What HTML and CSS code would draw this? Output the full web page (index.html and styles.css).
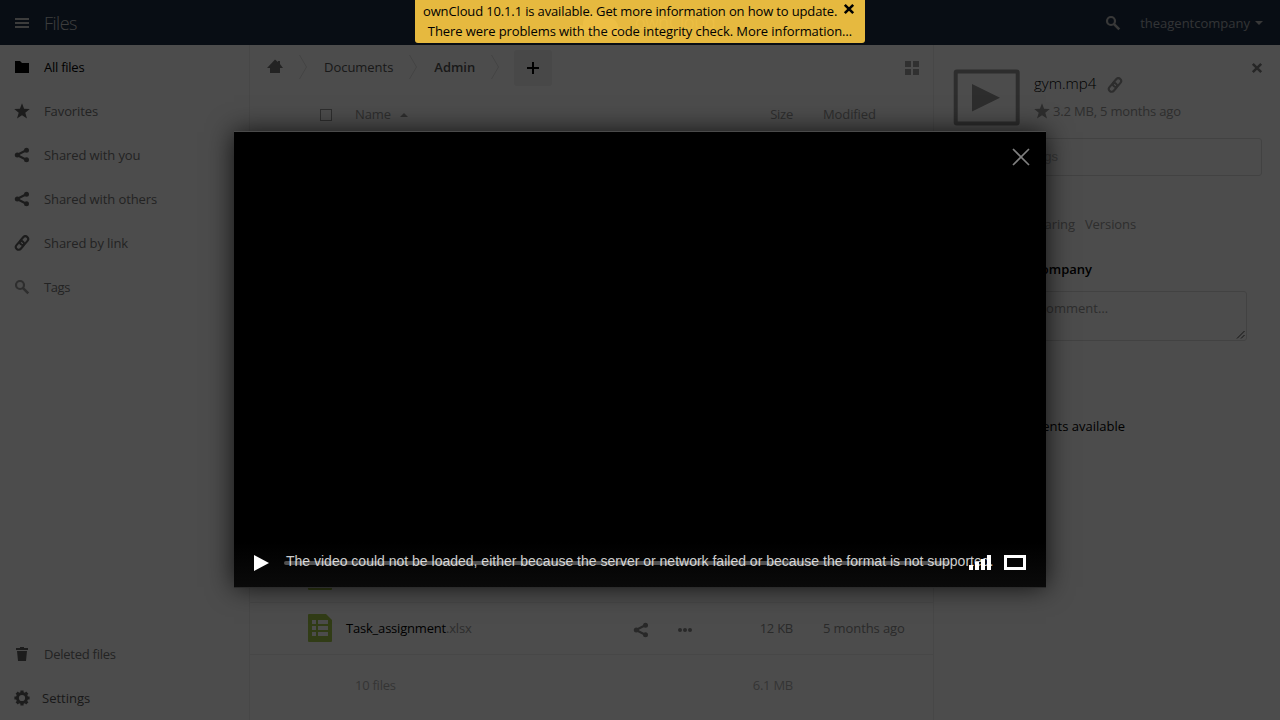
FILE: index.html
```
<!DOCTYPE html>
<html lang="en">
<head>
<meta charset="utf-8">
<title>Files - ownCloud</title>
<link rel="stylesheet" href="styles.css">
</head>
<body>
<svg width="0" height="0" class="defs">
  <symbol id="share" viewBox="0 0 16 16"><path d="M12.700 3 3 8l9.700 5" fill="none" stroke="currentColor" stroke-width="2.200"/><circle cx="3.300" cy="8" r="2.500"/><circle cx="12.500" cy="3.300" r="2.500"/><circle cx="12.500" cy="12.700" r="2.500"/></symbol>
  <symbol id="star" viewBox="0 0 16 16"><path d="M8 .3l2.100 5.400 5.700.3-4.500 3.700 1.700 5.800L8 12.300 3 15.500l1.700-5.800L.2 6l5.700-.3z"/></symbol>
  <symbol id="link" viewBox="0 0 16 16"><g fill="none" stroke="currentColor" stroke-width="2.100" transform="rotate(-50 8 8)"><rect x="0" y="5.200" width="9.600" height="5.600" rx="2.800"/><rect x="6.400" y="5.200" width="9.600" height="5.600" rx="2.800"/></g></symbol>
  <symbol id="search" viewBox="0 0 16 16"><circle cx="6" cy="6" r="4" fill="none" stroke="currentColor" stroke-width="2.200"/><path d="M8.800 8.800l5.500 5.500" stroke="currentColor" stroke-width="2.600"/></symbol>
  <symbol id="sheet" viewBox="0 0 24 28"><path d="M1 0h17l6 6v21a1 1 0 0 1-1 1H1a1 1 0 0 1-1-1V1a1 1 0 0 1 1-1z" fill="#a6c84c"/><path d="M4 6h4v4H4zm6 0h10v4H10zM4 12h4v4H4zm6 0h10v4H10zM4 18h4v4H4zm6 0h10v4H10z" fill="#fff"/></symbol>
</svg>
<header class="header">
  <svg class="burger" width="14" height="10"><path d="M0 0h14v2H0zM0 4h14v2H0zM0 8h14v2H0z"/></svg>
  <span class="app-name">Files</span>
  <div class="brand">
    <svg width="54" height="26" viewBox="0 0 54 26"><circle cx="8" cy="19" r="6"/><circle cx="22" cy="12" r="11"/><circle cx="37" cy="15" r="9"/><circle cx="47" cy="20" r="5"/></svg>
    <span>ownCloud</span>
  </div>
  <svg class="head-search" width="16" height="16"><use href="#search"/></svg>
  <span class="user">theagentcompany</span>
  <svg class="user-caret" width="8" height="4"><path d="M0 0h8L4 4z"/></svg>
</header>
<div class="layout">
  <nav class="nav">
    <a class="nav-item active"><svg width="16" height="16"><path d="M1 2h5l2 2h7v10H1z"/></svg>All files</a>
    <a class="nav-item"><svg width="16" height="16"><use href="#star"/></svg>Favorites</a>
    <a class="nav-item"><svg width="16" height="16"><use href="#share"/></svg>Shared with you</a>
    <a class="nav-item"><svg width="16" height="16"><use href="#share"/></svg>Shared with others</a>
    <a class="nav-item"><svg width="16" height="16"><use href="#link"/></svg>Shared by link</a>
    <a class="nav-item tagged"><svg class="faint" width="16" height="16"><use href="#search"/></svg>Tags</a>
    <a class="nav-item deleted"><svg width="16" height="16"><path d="M6 1h4v1h4v2H2V2h4zM3 5h10l-1 10H4z"/></svg>Deleted files</a>
    <a class="nav-item settings"><svg width="16" height="16" viewBox="-8 -8 16 16"><circle r="4.600" fill="none" stroke="currentColor" stroke-width="3"/><path d="M0-7.600V-5M0 7.600V5M-7.600 0H-5M7.600 0H5M-5.300-5.300-3.800-3.800M5.300-5.300 3.800-3.800M-5.300 5.300-3.800 3.800M5.300 5.300 3.800 3.800" stroke="currentColor" stroke-width="3.200"/></svg>Settings</a>
  </nav>
  <main class="main">
    <div class="crumbs">
      <svg class="home" width="16" height="16"><path d="M8 .5l3 2.500V2h2v3l3 4h-3v5H3V9H0z"/></svg>
      <svg class="sep" width="8" height="24"><path d="M.5 0l7 12-7 12"/></svg>
      <span class="crumb">Documents</span>
      <svg class="sep" width="8" height="24"><path d="M.5 0l7 12-7 12"/></svg>
      <span class="crumb current">Admin</span>
      <svg class="sep" width="8" height="24"><path d="M.5 0l7 12-7 12"/></svg>
      <span class="new"><svg width="12" height="12"><path d="M5 0h2v5h5v2H7v5H5V7H0V5h5z"/></svg></span>
      <svg class="grid-icon" width="14" height="14"><path d="M0 0h6v6H0zM8 0h6v6H8zM0 8h6v6H0zM8 8h6v6H8z"/></svg>
    </div>
    <div class="row head">
      <div class="name"><i class="check"></i>Name<svg class="sort" width="8" height="4"><path d="M4 0l4 4H0z"/></svg></div>
      <div class="size">Size</div><div class="date">Modified</div>
    </div>
    <div class="rows">
      <div class="row file"><div class="name"><svg width="24" height="28"><use href="#sheet"/></svg></div></div>
      <div class="row file">
        <div class="name"><svg width="24" height="28"><use href="#sheet"/></svg><span class="fname">Task_assignment<em>.xlsx</em></span>
          <span class="actions"><svg width="16" height="16"><use href="#share"/></svg><svg width="16" height="16"><circle cx="3" cy="8" r="2"/><circle cx="8" cy="8" r="2"/><circle cx="13" cy="8" r="2"/></svg></span></div>
        <div class="size">12 KB</div><div class="date">5 months ago</div>
      </div>
    </div>
    <div class="row summary"><div class="name">10 files</div><div class="size">6.1 MB</div><div class="date"></div></div>
  </main>
  <aside class="details">
    <div class="info">
      <svg width="67" height="57"><rect x="2.700" y="2.500" width="62" height="52" rx="1" fill="none" stroke="#969696" stroke-width="4"/><path d="M19 15l28 13.700L19 42.500z" fill="#969696"/></svg>
      <div class="info-text">
        <div class="title">gym.mp4<svg width="16" height="16"><use href="#link"/></svg></div>
        <div class="meta"><svg width="16" height="16"><use href="#star"/></svg>3.2 MB, 5 months ago</div>
      </div>
      <svg class="close" width="10" height="10"><path d="M.8.800l8.400 8.400M9.200.800L.8 9.200"/></svg>
    </div>
    <div class="tags"><span>Tags</span></div>
    <div class="tabs"><span>Sharing</span><span>Versions</span></div>
    <div class="author">theagentcompany</div>
    <div class="comment"><span>New comment…</span><svg width="8" height="8"><path d="M0 7.500L7.500 0M4 7.500L7.500 4"/></svg></div>
    <div class="empty">No comments available</div>
  </aside>
</div>
<div class="overlay"></div>
<section class="player">
  <svg class="player-close" width="18" height="18"><path d="M1 1l16 16M17 1L1 17"/></svg>
  <p class="error">The video could not be loaded, either because the server or network failed or because the format is not supported.</p>
  <div class="controls">
    <svg class="play" width="15" height="16"><path d="M0 0l15 8-15 8z"/></svg>
    <div class="progress"></div>
    <svg class="volume" width="22" height="15"><path d="M0 10h4v5H0zM6 7h4v8H6zM12 4h4v11h-4zM18 0h4v15h-4z"/></svg>
    <div class="fullscreen"></div>
  </div>
</section>
<div class="notice">
  <div>ownCloud 10.1.1 is available. Get more information on how to update.<svg width="10" height="10"><path d="M.8.800l8.400 8.400M9.200.800L.8 9.200"/></svg></div>
  <div>There were problems with the code integrity check. More information…</div>
</div>
</body>
</html>
```
FILE: styles.css
```
* { box-sizing: border-box; }
body { margin: 0; width: 1280px; height: 720px; overflow: hidden; background: #fff; font: 13px/20px "Open Sans", "Noto Sans", sans-serif; letter-spacing: -.1px; color: #000; }
svg { flex: none; display: block; fill: currentColor; overflow: visible; }
.defs { position: absolute; }

.header { position: relative; display: flex; align-items: center; height: 45px; padding: 0 17px 0 15px; background: #1d2d44; color: #aaa; }
.burger { color: #c8c8c8; }
.app-name { margin: 0 auto 0 15px; font-size: 18px; font-weight: 300; letter-spacing: -.5px; color: #ccc; }
.brand { position: absolute; left: 572px; top: 12px; display: flex; gap: 9px; color: #fff; font-size: 18px; font-weight: 300; }
.head-search { margin-right: 19px; color: #bbb; }
.user { margin-right: 5px; letter-spacing: 0; color: #a9adb4; }
.user-caret { color: #bbb; }

.layout { display: flex; height: 675px; }
.nav { display: flex; flex-direction: column; width: 250px; border-right: 1px solid #eee; }
.nav-item { display: flex; align-items: center; gap: 14px; height: 44px; padding-left: 14px; color: #757575; }
.nav-item svg { color: #606060; }
.nav-item svg.faint { color: #999; }
.nav-item.active, .nav-item.active svg { color: #000; }
.nav-item.active, .nav-item.deleted { letter-spacing: -.25px; }
.nav-item.tagged { letter-spacing: -.4px; }
.deleted { margin-top: auto; }
.settings { gap: 12px; letter-spacing: 0; color: #555; }

.main { display: flex; flex-direction: column; width: 683px; }
.crumbs { display: flex; align-items: center; height: 44px; padding: 0 14px 0 17px; letter-spacing: -.03px; color: #555; }
.home { color: #777; }
.sep { margin: 0 17px 0 16px; fill: none; stroke: #e0e0e0; }
.sep + .new { margin-left: -2px; }
.current { font-weight: 600; }
.new { display: flex; align-items: center; justify-content: center; width: 38px; height: 36px; margin-top: 2px; border-radius: 3px; background: #f1f1f1; color: #000; }
.grid-icon { margin-left: auto; color: #a0a0a0; margin-top: 2px; }
.row { display: grid; grid-template-columns: 443px 100px 1fr; align-items: center; color: #8c8c8c; }
.name { display: flex; align-items: center; }
.size { text-align: right; letter-spacing: -.25px; }
.date { padding-left: 30px; }
.head { height: 50px; color: #999; }
.head .name { padding-left: 70px; }
.check { width: 12px; height: 12px; margin: 1px 23px 0 0; border: 1px solid #999; }
.sort { margin: 1px 0 0 9px; }
.rows { display: flex; flex-direction: column; justify-content: flex-end; height: 516px; }
.file { height: 52px; padding-bottom: 1px; border-bottom: 1px solid #eee; }
.file .name { padding-left: 58px; }
.fname { margin-left: 14px; letter-spacing: -.2px; color: #000; }
.fname em { font-style: normal; color: #999; }
.actions { display: flex; gap: 28px; margin: 3px 0 0 auto; color: #858585; }
.summary { height: 60px; letter-spacing: -.25px; color: #b0b0b0; }
.summary .name { padding-left: 105px; }

.details { width: 347px; padding: 24px 18px 0 19px; border-left: 1px solid #eee; }
.info { display: flex; height: 69px; }
.info-text { width: 180px; padding: 2px 0 0 14px; }
.title { display: flex; align-items: center; gap: 11px; height: 24px; font-size: 15px; font-weight: 300; letter-spacing: 0; }
.title svg { margin-top: 3px; }
.title svg, .meta svg { color: #969696; }
.meta { display: flex; align-items: center; gap: 3px; margin-top: 6px; letter-spacing: -.18px; color: #999; white-space: nowrap; }
.close { margin: -6px 0 0 auto; stroke: #808080; stroke-width: 2.6; }
.tags { height: 38px; padding: 8px 0; border: 1px solid #ddd; border-radius: 3px; letter-spacing: 0; color: #b5b5b5; font-family: "Liberation Sans", Arial, sans-serif; }
.tags span { display: block; width: 104px; text-align: right; }
.tabs { display: flex; gap: 10px; justify-content: flex-end; width: 183px; margin-top: 38px; color: #999; }
.author { width: 139px; margin-top: 25px; text-align: right; font-weight: 600; letter-spacing: 0; }
.comment { display: flex; align-items: flex-end; justify-content: space-between; width: 294px; height: 50px; margin-top: 12px; border: 1px solid #ddd; border-radius: 3px; letter-spacing: 0; color: #999; }
.comment span { width: 154px; align-self: flex-start; padding-top: 6px; text-align: right; }
.comment svg { margin: 0 1px 1px 0; stroke: #444; }
.empty { width: 172px; margin-top: 75px; text-align: right; letter-spacing: 0; }

.overlay { position: absolute; inset: 0 auto auto 0; width: 1280px; height: 720px; background: rgba(0, 0, 0, .7); }
.player { position: absolute; left: 234px; top: 132px; display: flex; flex-direction: column; width: 812px; height: 455px; background: linear-gradient(#000 410px, #0a0a0a); box-shadow: 0 -1px 0 #4a4a4a, 0 1px 0 #2c2c2c, 0 0 25px rgba(0, 0, 0, .8); letter-spacing: 0; }
.player-close { margin: 16px 16px 0 auto; stroke: #808080; stroke-width: 1.7; }
.error { margin: auto 0 0; padding-left: 52px; font: 14px/20px "Liberation Sans", Arial, sans-serif; color: #ccc; white-space: nowrap; }
.controls { display: flex; align-items: center; height: 16px; margin: -16px 20px 16px; color: #fff; z-index: 1; }
.progress { width: 666px; height: 4px; margin: 0 19px 0 15px; border-radius: 2px; background: rgba(255, 255, 255, .3); }
.volume { margin-top: -1px; }
.fullscreen { width: 22px; height: 15px; margin: -1px 0 0 13px; border: 3px solid #fff; }

.notice { position: absolute; left: 415px; top: 0; width: 450px; height: 43px; padding: 1px 8px 0; border-radius: 0 0 3px 3px; background: #fc4; opacity: .9; text-align: center; white-space: nowrap; letter-spacing: -.09px; }
.notice div { display: flex; justify-content: center; }
.notice div:first-child { justify-content: flex-start; letter-spacing: -.14px; }
.notice svg { margin: 3px 0 0 7px; stroke: #000; stroke-width: 2.6; }
```
